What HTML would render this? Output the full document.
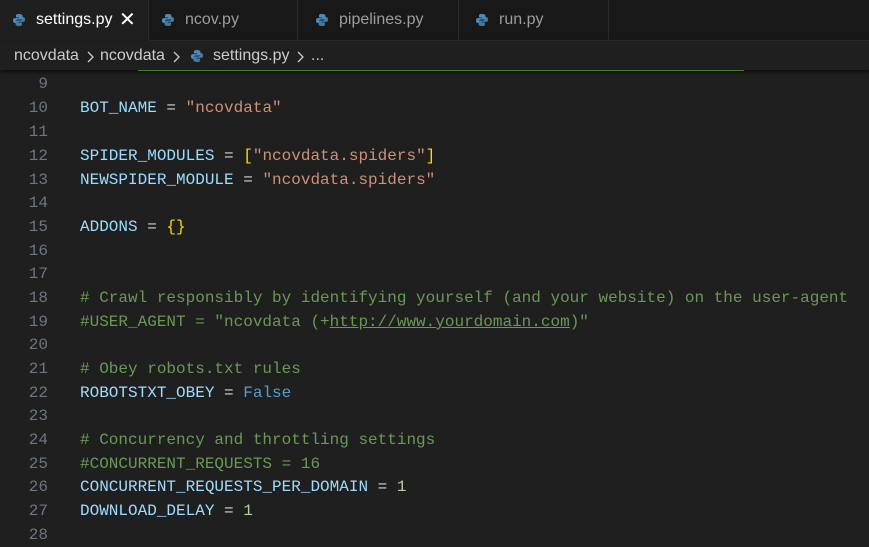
<!DOCTYPE html>
<html><head><style>
body{margin:0;width:869px;height:540px;background:#1f1f1f;overflow:hidden;font-family:"Liberation Sans",sans-serif;position:relative}
.tabs{position:absolute;top:0;left:0;width:869px;height:40px;background:#181818;border-bottom:1px solid #2b2b2b}
.tab{position:absolute;top:0;height:40px;border-right:1px solid #2b2b2b;color:#9d9d9d;font-size:16px;line-height:40px;box-sizing:border-box;padding-left:36px}
.tab.act{background:#1f1f1f;color:#fff;height:41px}
.py{position:absolute;left:12px;top:13px}
.bc{position:absolute;top:41px;left:0;width:869px;height:29px;background:#1f1f1f;color:#cccccc;font-size:16px;line-height:29px;box-shadow:0 2px 4px rgba(0,0,0,.6);z-index:2}
.ch{position:absolute;top:9px}
.green{position:absolute;top:70px;left:138px;width:606px;height:1px;background:#4b7a2e;z-index:3}
.code{position:absolute;top:72px;left:0;font-family:"Liberation Mono",monospace;font-size:16px}
.l{position:absolute;left:0;height:24px;line-height:24px;white-space:pre;width:869px}
.n{position:absolute;right:821px;color:#6e7681;text-align:right}
.t{position:absolute;left:80px}
.v{color:#9cdcfe}.s{color:#ce9178}.c{color:#6a9955}.d{color:#d4d4d4}.k{color:#569cd6}.m{color:#b5cea8}.b{color:#ffd700}
</style></head><body>
<div class="tabs">
<div class="tab act" style="left:0;width:149px">
<svg class="py" width="14" height="14" viewBox="0 0 14 14"><path d="M7 1C4 1 4 2 4 3v1.5h3.2v.6H2.6C1.2 5.1 1 6.5 1 7.5s.3 2.4 1.6 2.4H4V8.3c0-1 1-1.8 2-1.8h3c.9 0 1.5-.7 1.5-1.5V3C10.5 1.6 9 1 7 1z" fill="#4b8bbe"/><path d="M7 13c3 0 3-1 3-2V9.5H6.8v-.6h4.6c1.4 0 1.6-1.4 1.6-2.4s-.3-2.4-1.6-2.4H10v1.6c0 1-1 1.8-2 1.8H5c-.9 0-1.5.7-1.5 1.5V11c0 1.4 1.5 2 3.5 2z" fill="#4b8bbe" opacity=".85"/></svg>
settings.py <span style="position:absolute;left:119px;top:0;font-size:20px;color:#fff">✕</span></div>
<div class="tab" style="left:149px;width:149px"><svg class="py" width="14" height="14" viewBox="0 0 14 14"><path d="M7 1C4 1 4 2 4 3v1.5h3.2v.6H2.6C1.2 5.1 1 6.5 1 7.5s.3 2.4 1.6 2.4H4V8.3c0-1 1-1.8 2-1.8h3c.9 0 1.5-.7 1.5-1.5V3C10.5 1.6 9 1 7 1z" fill="#4b8bbe"/><path d="M7 13c3 0 3-1 3-2V9.5H6.8v-.6h4.6c1.4 0 1.6-1.4 1.6-2.4s-.3-2.4-1.6-2.4H10v1.6c0 1-1 1.8-2 1.8H5c-.9 0-1.5.7-1.5 1.5V11c0 1.4 1.5 2 3.5 2z" fill="#4b8bbe" opacity=".85"/></svg>ncov.py</div>
<div class="tab" style="left:298px;width:161px;padding-left:41px"><svg class="py" width="14" height="14" viewBox="0 0 14 14" style="left:17px"><path d="M7 1C4 1 4 2 4 3v1.5h3.2v.6H2.6C1.2 5.1 1 6.5 1 7.5s.3 2.4 1.6 2.4H4V8.3c0-1 1-1.8 2-1.8h3c.9 0 1.5-.7 1.5-1.5V3C10.5 1.6 9 1 7 1z" fill="#4b8bbe"/><path d="M7 13c3 0 3-1 3-2V9.5H6.8v-.6h4.6c1.4 0 1.6-1.4 1.6-2.4s-.3-2.4-1.6-2.4H10v1.6c0 1-1 1.8-2 1.8H5c-.9 0-1.5.7-1.5 1.5V11c0 1.4 1.5 2 3.5 2z" fill="#4b8bbe" opacity=".85"/></svg>pipelines.py</div>
<div class="tab" style="left:459px;width:150px;padding-left:40px"><svg class="py" width="14" height="14" viewBox="0 0 14 14" style="left:16px"><path d="M7 1C4 1 4 2 4 3v1.5h3.2v.6H2.6C1.2 5.1 1 6.5 1 7.5s.3 2.4 1.6 2.4H4V8.3c0-1 1-1.8 2-1.8h3c.9 0 1.5-.7 1.5-1.5V3C10.5 1.6 9 1 7 1z" fill="#4b8bbe"/><path d="M7 13c3 0 3-1 3-2V9.5H6.8v-.6h4.6c1.4 0 1.6-1.4 1.6-2.4s-.3-2.4-1.6-2.4H10v1.6c0 1-1 1.8-2 1.8H5c-.9 0-1.5.7-1.5 1.5V11c0 1.4 1.5 2 3.5 2z" fill="#4b8bbe" opacity=".85"/></svg>run.py</div>
</div>
<div class="bc"><span style="position:absolute;left:14px">ncovdata</span>
<svg class="ch" style="left:85px" width="10" height="14" viewBox="0 0 10 14"><path d="M3 2l5 5-5 5" stroke="#ccc" stroke-width="1.3" fill="none"/></svg>
<span style="position:absolute;left:100px">ncovdata</span>
<svg class="ch" style="left:171px" width="10" height="14" viewBox="0 0 10 14"><path d="M3 2l5 5-5 5" stroke="#ccc" stroke-width="1.3" fill="none"/></svg>
<svg style="position:absolute;left:190px;top:8px" width="14" height="14" viewBox="0 0 14 14"><path d="M7 1C4 1 4 2 4 3v1.5h3.2v.6H2.6C1.2 5.1 1 6.5 1 7.5s.3 2.4 1.6 2.4H4V8.3c0-1 1-1.8 2-1.8h3c.9 0 1.5-.7 1.5-1.5V3C10.5 1.6 9 1 7 1z" fill="#4b8bbe"/><path d="M7 13c3 0 3-1 3-2V9.5H6.8v-.6h4.6c1.4 0 1.6-1.4 1.6-2.4s-.3-2.4-1.6-2.4H10v1.6c0 1-1 1.8-2 1.8H5c-.9 0-1.5.7-1.5 1.5V11c0 1.4 1.5 2 3.5 2z" fill="#4b8bbe" opacity=".85"/></svg>
<span style="position:absolute;left:213px">settings.py</span>
<svg class="ch" style="left:295px" width="10" height="14" viewBox="0 0 10 14"><path d="M3 2l5 5-5 5" stroke="#ccc" stroke-width="1.3" fill="none"/></svg>
<span style="position:absolute;left:311px">...</span></div>
<div class="green"></div>
<div class="code">
<div class="l" style="top:0"><span class="n">9</span></div>
<div class="l" style="top:24px"><span class="n">10</span><span class="t"><span class="v">BOT_NAME</span><span class="d"> = </span><span class="s">"ncovdata"</span></span></div>
<div class="l" style="top:48px"><span class="n">11</span></div>
<div class="l" style="top:72px"><span class="n">12</span><span class="t"><span class="v">SPIDER_MODULES</span><span class="d"> = </span><span class="b">[</span><span class="s">"ncovdata.spiders"</span><span class="b">]</span></span></div>
<div class="l" style="top:96px"><span class="n">13</span><span class="t"><span class="v">NEWSPIDER_MODULE</span><span class="d"> = </span><span class="s">"ncovdata.spiders"</span></span></div>
<div class="l" style="top:119px"><span class="n">14</span></div>
<div class="l" style="top:143px"><span class="n">15</span><span class="t"><span class="v">ADDONS</span><span class="d"> = </span><span class="b">{}</span></span></div>
<div class="l" style="top:167px"><span class="n">16</span></div>
<div class="l" style="top:190px"><span class="n">17</span></div>
<div class="l" style="top:214px"><span class="n">18</span><span class="t c"># Crawl responsibly by identifying yourself (and your website) on the user-agent</span></div>
<div class="l" style="top:238px"><span class="n">19</span><span class="t c">#USER_AGENT = "ncovdata (+<u>http://www.yourdomain.com</u>)"</span></div>
<div class="l" style="top:261px"><span class="n">20</span></div>
<div class="l" style="top:285px"><span class="n">21</span><span class="t c"># Obey robots.txt rules</span></div>
<div class="l" style="top:309px"><span class="n">22</span><span class="t"><span class="v">ROBOTSTXT_OBEY</span><span class="d"> = </span><span class="k">False</span></span></div>
<div class="l" style="top:332px"><span class="n">23</span></div>
<div class="l" style="top:356px"><span class="n">24</span><span class="t c"># Concurrency and throttling settings</span></div>
<div class="l" style="top:380px"><span class="n">25</span><span class="t c">#CONCURRENT_REQUESTS = 16</span></div>
<div class="l" style="top:403px"><span class="n">26</span><span class="t"><span class="v">CONCURRENT_REQUESTS_PER_DOMAIN</span><span class="d"> = </span><span class="m">1</span></span></div>
<div class="l" style="top:427px"><span class="n">27</span><span class="t"><span class="v">DOWNLOAD_DELAY</span><span class="d"> = </span><span class="m">1</span></span></div>
<div class="l" style="top:451px"><span class="n">28</span></div>
</div>
</body></html>
